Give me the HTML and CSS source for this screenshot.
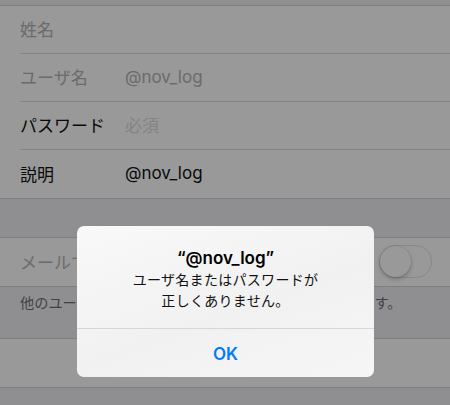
FILE: index.html
```html
<!DOCTYPE html>
<html lang="ja">
  <head>
    <meta charset="utf-8">
    <title>アカウント</title>
    <link rel="stylesheet" href="styles.css">
  </head>
  <body>

    <div class="screen">

      <div class="topgap"></div>

      <div class="group">
        <div class="row"><div class="cell"><span class="label dim">姓名</span></div></div>
        <div class="row"><div class="cell"><span class="label dim">ユーザ名</span><span class="value dim">@nov_log</span></div></div>
        <div class="row"><div class="cell"><span class="label">パスワード</span><span class="value placeholder">必須</span></div></div>
        <div class="row last"><div class="cell"><span class="label">説明</span><span class="value">@nov_log</span></div></div>
      </div>

      <div class="gap"></div>

      <div class="group">
        <div class="row last">
          <div class="cell">
            <span class="label dim">メールで検索を許可</span>
            <span class="switch"><span class="knob"></span></span>
          </div>
        </div>
      </div>

      <div class="footer">他のユーザがあなたをメールで見つけられるようにします。</div>

      <div class="group">
        <div class="row last"><div class="cell"></div></div>
      </div>

      <div class="rest"></div>

      <div class="dimmer"></div>

      <div class="alert">
        <div class="alertbody">
          <div class="alerttitle">“@nov_log”</div>
          <div class="alertmsg">ユーザ名またはパスワードが<br>正しくありません。</div>
        </div>
        <div class="alertbutton">OK</div>
      </div>

    </div>

  </body>
</html>
```

FILE: styles.css
```css
html, body           { margin: 0; padding: 0; }
body                 { background-color: #efeff4; font-family: "Inter", "Noto Sans CJK JP", sans-serif; }

.screen              { position: relative; width: 450px; height: 405px; overflow: hidden; background-color: #efeff4; }

.topgap              { height: 5px; }
.gap                 { height: 38px; }
.rest                { height: 19px; }

.group               { background-color: #fff; border-top: 1px solid #d4d4d8; border-bottom: 1px solid #d4d4d8; }

.row                 { height: 48px; padding-left: 20px; }
.cell                { height: 100%; box-sizing: border-box; border-bottom: 1px solid #dcdce0; display: flex; align-items: center; padding: 0 20px 2px 0; }
.row.last .cell      { border-bottom: none; }

.label               { width: 105px; font-size: 17px; color: #111; white-space: nowrap; }
.value               { font-size: 17px; color: #111; }
.dim                 { color: #b3b3b3; }
.placeholder         { color: #dcdcdc; }

.switch              { margin-left: auto; width: 51px; height: 31px; border-radius: 16px; background-color: #fff; border: 1.5px solid #e4e4e8; position: relative; flex-shrink: 0; margin-right: -2px; }
.knob                { position: absolute; left: 0; top: 0; width: 31px; height: 31px; border-radius: 50%; background-color: #fff; box-shadow: 0 2px 4px rgba(0,0,0,0.25), 0 0 1px rgba(0,0,0,0.2); }

.footer              { height: 51px; box-sizing: border-box; padding: 5px 0 0 20px; font-size: 14.2px; color: #6d6d72; white-space: nowrap; }

.dimmer              { position: absolute; left: 0; top: 0; right: 0; bottom: 0; background-color: rgba(0,0,0,0.4); }

.alert               { position: absolute; left: 77px; top: 226px; width: 297px; height: 151px; border-radius: 7px; background: linear-gradient(160deg, #f9f9f9 0%, #f1f1f1 55%, #f6f6f6 100%); overflow: hidden; display: flex; flex-direction: column; }
.alertbody           { padding: 21px 16px 0 16px; height: 103px; box-sizing: border-box; border-bottom: 1px solid #d6d6da; text-align: center; }
.alerttitle          { font-size: 17px; font-weight: 600; line-height: 22px; color: #000; }
.alertmsg            { font-size: 14px; line-height: 21px; color: #111; letter-spacing: 0.3px; }
.alertbutton         { flex: 1; display: flex; align-items: center; justify-content: center; font-size: 17px; font-weight: 600; color: #007aff; padding-top: 2px; }
```
